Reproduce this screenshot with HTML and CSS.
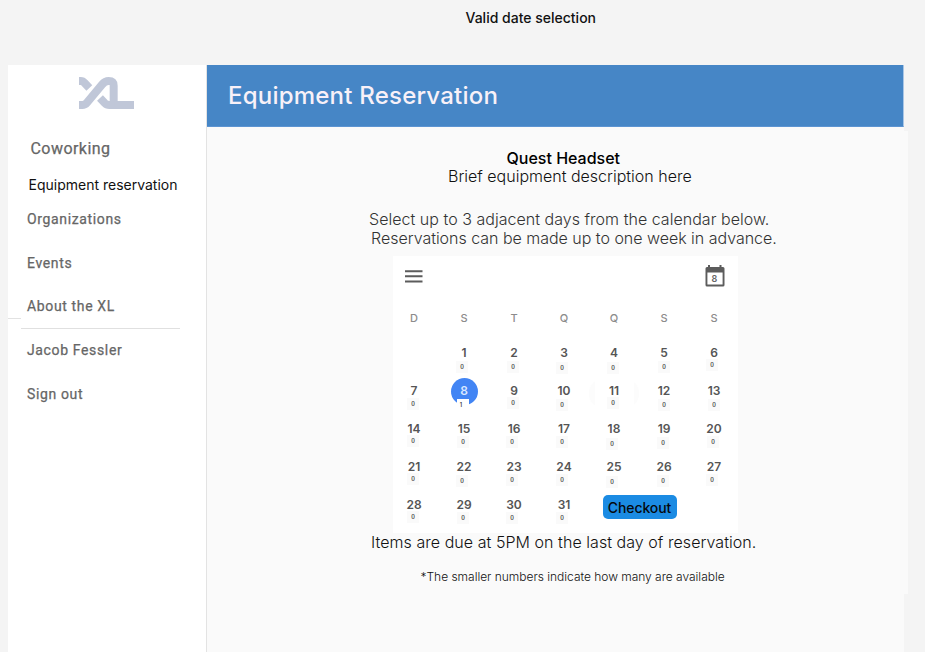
FILE: index.html
```html
<!DOCTYPE html>
<html lang="en">
<head>
<meta charset="utf-8">
<title>Equipment Reservation</title>
<link rel="stylesheet" href="styles.css">
</head>
<body>
<h2 class="caption">Valid date selection</h2>
<div class="frame">
  <nav class="sidebar">
    <svg class="logo" viewBox="0 0 165 96" fill="none" stroke="#c0c7d8" stroke-width="24">
      <path d="M0 84H10Q18 84 24 77L69 23Q78 12 89 12Q104 12 104 26V84H165"/>
      <path d="M0 12H5Q12 12 17 18L31 33"/>
      <path d="M63 63L77 78Q83 84 91 84H106"/>
    </svg>
    <a class="link first">Coworking</a>
    <a class="link current">Equipment reservation</a>
    <a class="link">Organizations</a>
    <a class="link">Events</a>
    <a class="link about">About the XL</a>
    <div class="rules"><span class="stub"></span><span class="rule"></span></div>
    <a class="link user">Jacob Fessler</a>
    <a class="link">Sign out</a>
  </nav>
  <main class="main">
    <header class="header"><h1>Equipment Reservation</h1></header>
    <section class="content">
      <h3 class="name">Quest Headset</h3>
      <p class="desc">Brief equipment description here</p>
      <p class="help one">Select up to 3 adjacent days from the calendar below.</p>
      <p class="help two">Reservations can be made up to one week in advance.</p>
      <div class="calendar">
        <div class="toolbar">
          <svg class="menu" viewBox="0 0 18 13" stroke="#5c5c5c" stroke-width="2"><path d="M0 1.2H17.5M0 6.3H17.5M0 11.4H17.5"/></svg>
          <div class="today">
            <svg viewBox="0 0 20 22"><path fill="#5c5c5c" fill-rule="evenodd" d="M3 0H5V2H14.5V0H16.5V2H18Q19.5 2 19.5 3.5V20Q19.5 21.5 18 21.5H2Q.5 21.5 .5 20V3.500Q.5 2 2 2H3ZM2.400 7.500V19.500H17.600V7.500Z"/></svg>
            <span>8</span>
          </div>
        </div>
        <div class="week head"><b>D</b><b>S</b><b>T</b><b>Q</b><b>Q</b><b>S</b><b>S</b></div>
        <div class="week">
          <div class="day blank"></div>
          <div class="day">1<i class="l">0</i></div>
          <div class="day">2<i>0</i></div>
          <div class="day">3<i class="l d">0</i></div>
          <div class="day">4<i class="d">0</i></div>
          <div class="day">5<i class="r">0</i></div>
          <div class="day">6<i class="l uu">0</i></div>
        </div>
        <div class="week">
          <div class="day">7<i class="u">0</i></div>
          <div class="day selected"><span>8</span><i class="l">1</i></div>
          <div class="day">9<i class="uu">0</i></div>
          <div class="day">10<i class="l">0</i></div>
          <div class="day faded"><span>11</span><i class="uu">0</i></div>
          <div class="day">12<i class="r">0</i></div>
          <div class="day">13<i class="r">0</i></div>
        </div>
        <div class="week">
          <div class="day">14<i class="uu">0</i></div>
          <div class="day">15<i class="u">0</i></div>
          <div class="day">16<i class="l u">0</i></div>
          <div class="day">17<i class="l u">0</i></div>
          <div class="day">18<i class="l d">0</i></div>
          <div class="day">19<i>0</i></div>
          <div class="day">20<i class="u">0</i></div>
        </div>
        <div class="week">
          <div class="day">21<i class="uu">0</i></div>
          <div class="day">22<i class="l">0</i></div>
          <div class="day">23<i class="l u">0</i></div>
          <div class="day">24<i class="l u">0</i></div>
          <div class="day">25<i class="l d">0</i></div>
          <div class="day">26<i>0</i></div>
          <div class="day">27<i class="l u">0</i></div>
        </div>
        <div class="week">
          <div class="day">28<i class="uu">0</i></div>
          <div class="day">29<i class="u">0</i></div>
          <div class="day">30<i class="l u">0</i></div>
          <div class="day">31<i class="l u">0</i></div>
          <button class="checkout">Checkout</button>
        </div>
      </div>
      <p class="due">Items are due at 5PM on the last day of reservation.</p>
      <p class="note">*The smaller numbers indicate how many are available</p>
    </section>
  </main>
</div>
</body>
</html>
```
FILE: styles.css
```css
* { box-sizing: border-box; }
body { margin: 0; height: 652px; overflow: hidden; background: #f4f4f4; font-family: Inter, "Liberation Sans", sans-serif; color: #111; display: flex; flex-direction: column; }
h1, h2, h3, p { margin: 0; white-space: nowrap; }
.caption { height: 65px; padding: 8px 0 0 465.5px; font-size: 14px; line-height: 19px; font-weight: 500; }
.frame { width: 896px; height: 587px; margin-left: 8px; display: flex; }

.sidebar { width: 199px; background: #fff; border-right: 1px solid #e3e3e3; display: flex; flex-direction: column; }
.logo { width: 55px; height: 32px; margin: 12px 0 0 71px; flex: none; }
.link { height: 20px; line-height: 20px; margin: 0 0 23.5px 19px; font-family: Roboto, sans-serif; font-size: 14px; font-weight: 400; letter-spacing: 0.64px; color: #666; -webkit-text-stroke: 0.25px #666; white-space: nowrap; flex: none; }
.link.first { margin: 30px 0 16px 22.5px; font-size: 16px; letter-spacing: 0.45px; }
.link.current { margin: 0 0 14px 20.5px; font-family: Inter, sans-serif; letter-spacing: 0; color: #111; -webkit-text-stroke: 0; }
.link.about { margin-bottom: 2px; }
.rules { height: 11px; display: flex; align-items: flex-start; flex: none; }
.stub { width: 13px; height: 1px; background: #e2e2e2; }
.rule { width: 159px; height: 1px; margin-top: 10px; background: #e0e0e0; }
.link.user { margin-top: 11px; }

.main { width: 697px; background: #fafafa; }
.header { height: 62px; padding: 15px 0 0 21px; background: #4686c6; border-bottom: 1px solid #5c94d2; border-right: 1px solid #a9c6e6; }
.header h1 { font-size: 24px; line-height: 31px; font-weight: 500; letter-spacing: 0.22px; color: #f8f1f8; }
.content { width: 680px; height: 463px; margin: 4px 0 0 21px; padding-top: 18px; background: #fafafa; }
.name { padding-left: 278.5px; font-size: 16px; line-height: 18px; font-weight: 500; color: #000; }
.desc { padding-left: 220px; font-size: 16px; line-height: 18px; font-weight: 300; }
.help { font-size: 16px; line-height: 19px; font-weight: 300; color: #333; }
.help.one { margin-top: 25px; padding-left: 141px; letter-spacing: 0.03px; }
.help.two { padding-left: 143px; letter-spacing: -0.02px; }

.calendar { width: 345px; height: 277px; margin: 8px 0 0 165px; background: #fff; }
.toolbar { height: 43px; padding: 8px 13.5px 0 12px; display: flex; justify-content: space-between; }
.menu { width: 18px; height: 13px; margin-top: 6px; }
.today { width: 20px; height: 22px; margin-top: 0.5px; position: relative; }
.today svg { display: block; width: 20px; height: 22px; }
.today span { position: absolute; left: 0; top: 7px; width: 20px; text-align: center; font-size: 9px; line-height: 13px; font-weight: 600; color: #666; }
.week { width: 350px; height: 38px; margin-left: -4px; display: grid; grid-template-columns: repeat(7, 50px); }
.week.head { height: 35px; }
.head b { text-align: center; font-size: 11px; line-height: 38px; font-weight: 500; color: #8c8c8c; }
.day { position: relative; padding-top: 10px; text-align: center; font-size: 12px; line-height: 18px; font-weight: 600; color: #555; }
.day span { position: relative; }
.day i { position: absolute; left: 18px; top: 27px; width: 12px; height: 12px; background: #fafafa; font-style: normal; font-size: 5.5px; line-height: 12px; font-weight: 600; color: #444; }
.day i.l { margin-left: -1px; }
.day i.r { margin-left: 1px; }
.day i.u { margin-top: -1px; }
.day i.uu { margin-top: -2px; }
.day i.d { margin-top: 1px; }
.selected { color: #d9e8ff; }
.selected::before { content: ""; position: absolute; left: 12px; top: 6px; width: 27px; height: 27px; border-radius: 50%; background: #4285f4; }
.selected i.l { margin-left: 0; padding-right: 4px; background: #fff; }
.faded::before { content: ""; position: absolute; left: 0; top: 7px; width: 50px; height: 29px; border-radius: 14px; background: #fcfcfc; }
.faded::after { content: ""; position: absolute; left: 6px; top: 5px; width: 39px; height: 33px; background: #fff; }
.faded span, .faded i { z-index: 1; }
.checkout { grid-column: 5 / span 2; width: 74px; height: 24px; margin: 9px 0 0 14px; padding: 0 1px 0 0; border: 0; border-radius: 5px; background: #1b8be3; font: 500 14px/25px Inter, sans-serif; letter-spacing: -0.1px; color: #05080c; text-align: center; white-space: nowrap; }
.due { padding-left: 143px; font-size: 16px; line-height: 19px; font-weight: 300; letter-spacing: 0.05px; }
.note { margin-top: 16px; padding-left: 192.5px; font-size: 12px; line-height: 17px; font-weight: 300; letter-spacing: -0.02px; }
```
